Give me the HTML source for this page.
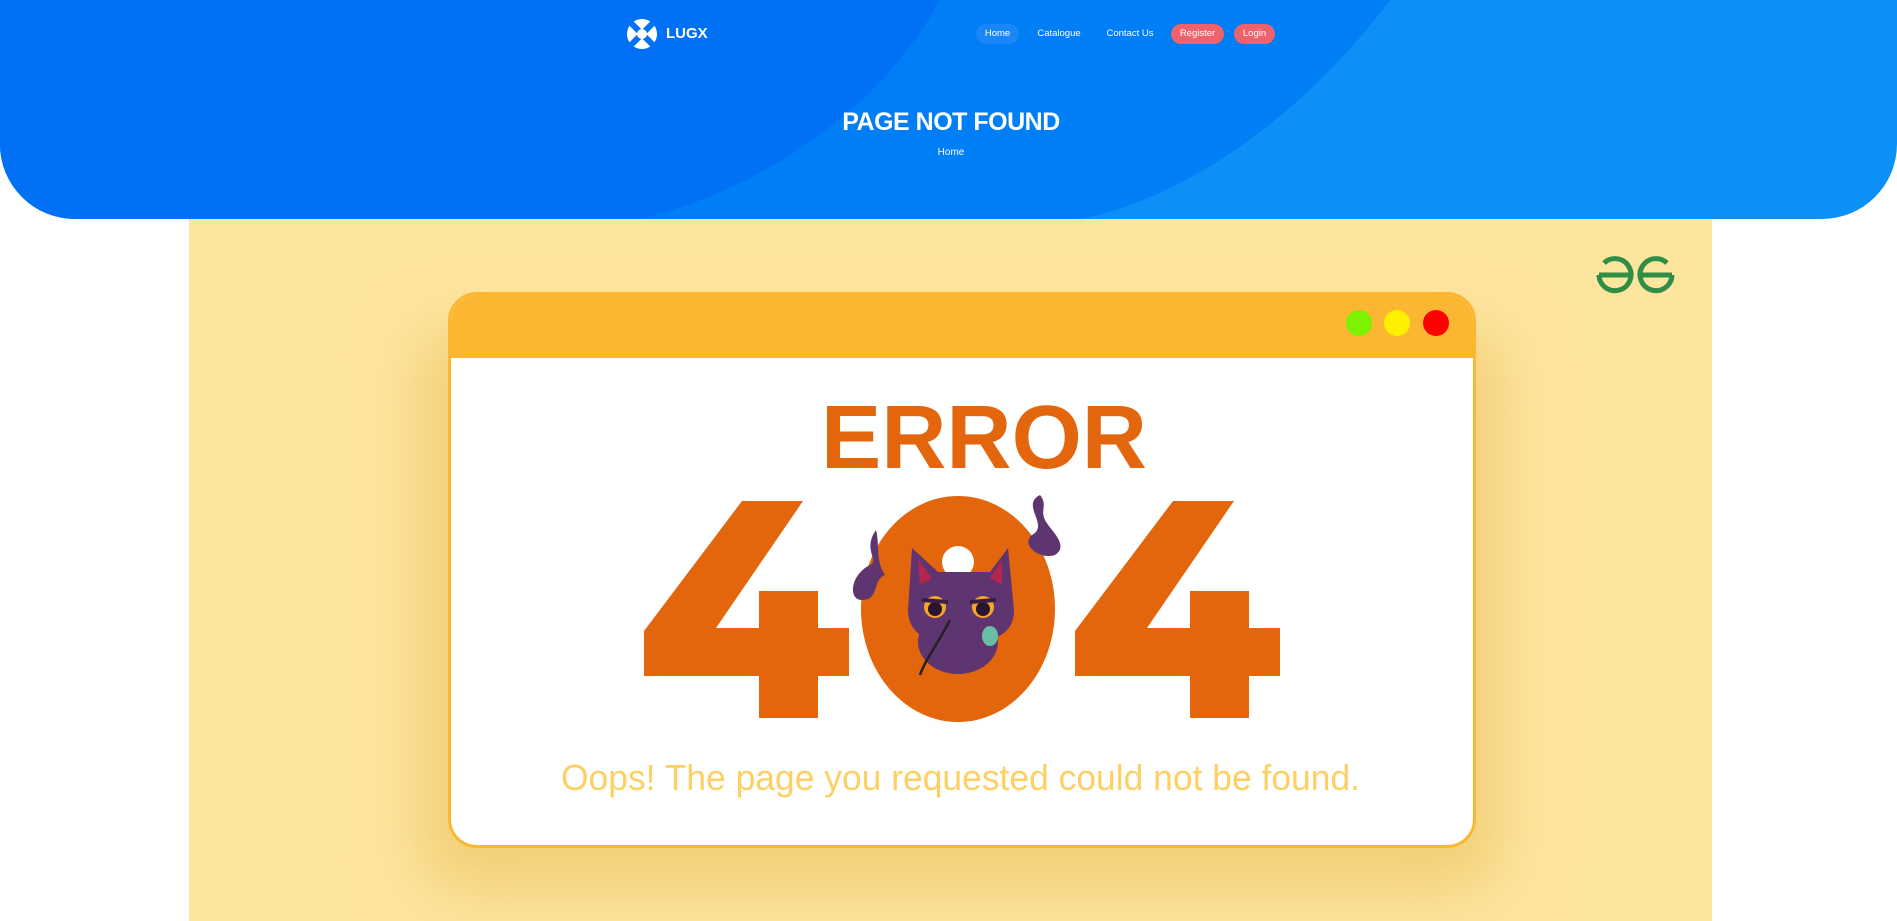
<!DOCTYPE html>
<html><head><meta charset="utf-8"><style>
*{margin:0;padding:0;box-sizing:border-box}
body{width:1897px;height:921px;background:#fff;position:relative;overflow:hidden;font-family:"Liberation Sans",sans-serif}
.hdr{position:absolute;left:0;top:0;width:1897px;height:219px;border-radius:0 0 75px 75px;overflow:hidden;background:#0a90f7}
.nav a{position:absolute;top:24px;height:20px;line-height:20px;font-size:9.5px;color:#fff;border-radius:10px;text-align:center}
.abs{position:absolute}
</style></head><body>
<div class="hdr">
<svg width="1897" height="219" style="position:absolute;left:0;top:0">
<path d="M0 0 H1390 C1300 120 1180 200 1080 219 H0Z" fill="#007ef6"/>
<path d="M0 0 H940 C880 110 760 190 640 219 H0Z" fill="#0071f5"/>
</svg>
<svg class="abs" style="left:626px;top:18px" width="32" height="32" viewBox="0 0 32 32"><circle cx="16" cy="16" r="15" fill="#fff"/><path d="M3 3 L29 29 M29 3 L3 29" stroke="#0073f5" stroke-width="6"/><circle cx="16" cy="16" r="5" fill="#fff"/></svg>
<div class="abs" style="left:666px;top:25px;color:#fff;font-weight:bold;font-size:15px">LUGX</div>
<div class="nav">
<a style="left:976px;width:43px;background:#1a86f7">Home</a>
<a style="left:1030px;width:58px">Catalogue</a>
<a style="left:1100px;width:60px">Contact Us</a>
<a style="left:1171px;width:53px;background:#ee626b">Register</a>
<a style="left:1234px;width:41px;background:#ee626b">Login</a>
</div>
<div class="abs" style="left:0;width:1902px;top:108px;text-align:center;color:#fff;font-weight:bold;font-size:25px;letter-spacing:-0.5px">PAGE NOT FOUND</div>
<div class="abs" style="left:0;width:1902px;top:147px;text-align:center;color:#fff;font-size:10px">Home</div>
</div>
<div class="abs" style="left:189px;top:219px;width:1523px;height:702px;background:#fee59e"></div>
<div class="abs" style="left:420px;top:330px;width:1080px;height:560px;background:#f2cf78;filter:blur(30px);border-radius:40px"></div>
<div class="abs" style="left:448px;top:292px;width:1028px;height:556px;border-radius:29px;border:3px solid #fbb731;background:#fff;overflow:hidden">
<div style="height:63px;background:#fbb731"></div>
</div>
<svg class="abs" style="left:0;top:0" width="1897" height="921">
<circle cx="1359" cy="323" r="13" fill="#7cf200"/>
<circle cx="1397" cy="323" r="13" fill="#fff000"/>
<circle cx="1436" cy="323" r="13" fill="#fe0000"/>
<text x="821" y="468" font-size="90" font-weight="bold" fill="#e3660d" textLength="326" lengthAdjust="spacingAndGlyphs" font-family="Liberation Sans">ERROR</text>
<g fill="#e3660d">
<polygon points="742,501 803,501 716,628 759,628 759,591 818,591 818,628 849,628 849,676 818,676 818,718 759,718 759,676 644,676 644,631"/>
<polygon transform="translate(431,0)" points="742,501 803,501 716,628 759,628 759,591 818,591 818,628 849,628 849,676 818,676 818,718 759,718 759,676 644,676 644,631"/>
<ellipse cx="958" cy="609" rx="97" ry="113"/>
</g>
<circle cx="958" cy="562" r="16" fill="#fff"/>
<g fill="#5e3570">
<path d="M876 530 C862 550 880 560 870 565 C850 575 848 600 862 600 C880 600 872 580 885 575 C875 560 880 545 876 530Z"/>
<path d="M1040 495 C1020 505 1050 525 1032 535 C1020 545 1040 560 1055 555 C1070 545 1050 530 1045 520 C1040 510 1048 505 1040 495Z"/>
<path d="M912 548 L938 572 L990 572 L1008 548 L1014 610 C1014 630 1000 640 980 640 L940 640 C920 640 908 628 908 610Z"/>
<ellipse cx="958" cy="642" rx="40" ry="32"/>
</g>
<path d="M918 560 L932 578 L920 585Z M1002 560 L990 578 L1002 585Z" fill="#b4264e"/>
<circle cx="935" cy="607" r="11" fill="#f5a623"/><circle cx="983" cy="607" r="11" fill="#f5a623"/>
<circle cx="935" cy="609" r="7" fill="#2a1530"/><circle cx="983" cy="609" r="7" fill="#2a1530"/>
<path d="M922 600 L948 602 M970 602 L996 600" stroke="#3a1c45" stroke-width="4"/>
<path d="M950 620 C940 640 925 660 920 675" stroke="#222" stroke-width="2.5" fill="none"/>
<ellipse cx="990" cy="636" rx="8" ry="10" fill="#6bbea6"/>
<text x="561" y="790" font-size="36" fill="#fdd063" textLength="799" lengthAdjust="spacingAndGlyphs" font-family="Liberation Sans">Oops! The page you requested could not be found.</text>
<g fill="none" stroke="#2f8d46" stroke-width="5">
<path d="M1604 263 A16 16 0 1 1 1599 275 M1599 275 H1632"/>
<path d="M1667 263 A16 16 0 1 0 1672 275 M1672 275 H1639"/>
</g>
</svg>
</body></html>
